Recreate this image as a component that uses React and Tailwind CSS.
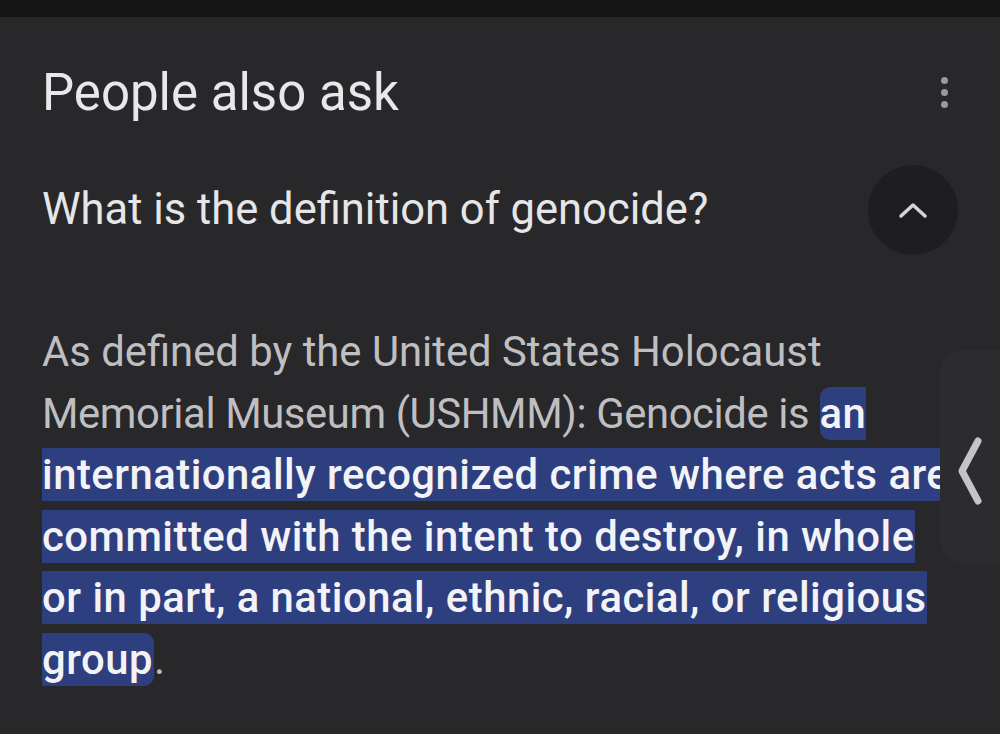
export default function App() {
  return (
    <div
      className="relative w-[1000px] h-[734px] overflow-hidden bg-[#28282a]"
      style={{ fontFamily: "Roboto, 'Noto Sans', sans-serif" }}
    >
      <div className="h-[17px] bg-[#161616]" />

      <div className="pl-[42px]">
        <div className="mt-[43px] h-[64px] flex items-center justify-between pr-[44px]">
          <h1 className="text-[51px] leading-none text-[#e8e8ea]">People also ask</h1>
          <div className="w-[24px] flex flex-col items-center gap-[5px]">
            <span className="w-[7px] h-[7px] rounded-full bg-[#9a9a9c]" />
            <span className="w-[7px] h-[7px] rounded-full bg-[#9a9a9c]" />
            <span className="w-[7px] h-[7px] rounded-full bg-[#9a9a9c]" />
          </div>
        </div>

        <div className="mt-[41px] h-[90px] flex items-center justify-between pr-[42px]">
          <h2 className="text-[43.5px] leading-none text-[#e6e6e8]">What is the definition of genocide?</h2>
          <button className="w-[90px] h-[90px] rounded-full bg-[#1e1e20] flex items-center justify-center">
            <svg width="30" height="18" viewBox="0 0 30 18" fill="none">
              <path d="M3 15 L15 4 L27 15" stroke="#d4d4da" strokeWidth="3.5" strokeLinecap="round" strokeLinejoin="round" />
            </svg>
          </button>
        </div>

        <p className="mt-[66px] text-[41.8px] leading-[61.5px] text-[#bfbfc3] whitespace-nowrap">
          As defined by the United States Holocaust
          <br />
          <span className="tracking-[-0.4px]">Memorial Museum (USHMM): Genocide is</span>{" "}
          <span className="bg-[#2e3f7f] text-[#f3f3f7] font-medium tracking-[0.5px] rounded-[10px] py-[2px] pr-[1px]">
            an
            <br />
            internationally recognized crime where acts are
            <br />
            committed with the intent to destroy, in whole
            <br />
            or in part, a national, ethnic, racial, or religious
            <br />
            group
          </span>
          .
        </p>
      </div>

      <div className="absolute left-[940px] top-[350px] w-[80px] h-[214px] rounded-[24px] bg-[#2c2c2e] pl-[16px] pt-[85px]">
        <svg width="28" height="72" viewBox="0 0 28 72" fill="none">
          <path d="M22 6 L6 36 L22 66" stroke="#c4c4c8" strokeWidth="7" strokeLinecap="round" strokeLinejoin="round" />
        </svg>
      </div>
    </div>
  );
}
